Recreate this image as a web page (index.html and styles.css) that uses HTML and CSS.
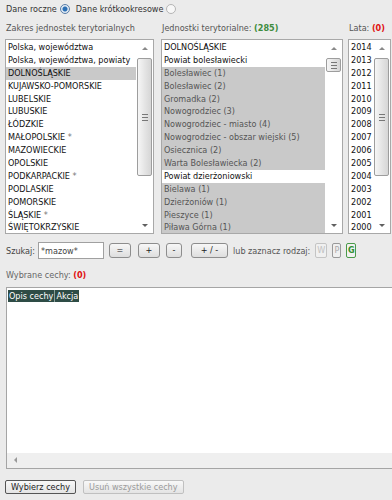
FILE: index.html
```html
<!DOCTYPE html>
<html lang="pl">
<head>
    <meta charset="UTF-8">
    <title>Wybór cech</title>
    <link rel="stylesheet" href="styles.css">
</head>
<body>
    <div class="typ-danych">
        <span>Dane roczne</span>
        <span class="radio zaznaczone"></span>
        <span>Dane krótkookresowe</span>
        <span class="radio"></span>
    </div>

    <div class="panele">
        <div class="panel panel-zakres">
            <div class="naglowek">Zakres jednostek terytorialnych</div>
            <div class="lista">
                <div class="elementy">
                    <div class="element">Polska, województwa</div>
                    <div class="element">Polska, województwa, powiaty</div>
                    <div class="element wybrany">DOLNOŚLĄSKIE</div>
                    <div class="element">KUJAWSKO-POMORSKIE</div>
                    <div class="element">LUBELSKIE</div>
                    <div class="element">LUBUSKIE</div>
                    <div class="element">ŁÓDZKIE</div>
                    <div class="element">MAŁOPOLSKIE <span class="gwiazdka">*</span></div>
                    <div class="element">MAZOWIECKIE</div>
                    <div class="element">OPOLSKIE</div>
                    <div class="element">PODKARPACKIE <span class="gwiazdka">*</span></div>
                    <div class="element">PODLASKIE</div>
                    <div class="element">POMORSKIE</div>
                    <div class="element">ŚLĄSKIE <span class="gwiazdka">*</span></div>
                    <div class="element">ŚWIĘTOKRZYSKIE</div>
                </div>
                <div class="suwak">
                    <div class="strzalka gora"></div>
                    <div class="uchwyt uchwyt-duzy"><span class="chwyt"></span></div>
                    <div class="tor"></div>
                    <div class="strzalka dol"></div>
                </div>
            </div>
        </div>

        <div class="panel panel-jednostki">
            <div class="naglowek">Jednostki terytorialne: <b class="zielony">(285)</b></div>
            <div class="lista">
                <div class="elementy">
                    <div class="element">DOLNOŚLĄSKIE</div>
                    <div class="element">Powiat bolesławiecki</div>
                    <div class="element wyszarzony">Bolesławiec (1)</div>
                    <div class="element wyszarzony">Bolesławiec (2)</div>
                    <div class="element wyszarzony">Gromadka (2)</div>
                    <div class="element wyszarzony">Nowogrodziec (3)</div>
                    <div class="element wyszarzony">Nowogrodziec - miasto (4)</div>
                    <div class="element wyszarzony">Nowogrodziec - obszar wiejski (5)</div>
                    <div class="element wyszarzony">Osiecznica (2)</div>
                    <div class="element wyszarzony">Warta Bolesławiecka (2)</div>
                    <div class="element">Powiat dzierżoniowski</div>
                    <div class="element wyszarzony">Bielawa (1)</div>
                    <div class="element wyszarzony">Dzierżoniów (1)</div>
                    <div class="element wyszarzony">Pieszyce (1)</div>
                    <div class="element wyszarzony">Piława Górna (1)</div>
                </div>
                <div class="suwak">
                    <div class="strzalka gora"></div>
                    <div class="uchwyt uchwyt-maly"><span class="chwyt"></span></div>
                    <div class="tor"></div>
                    <div class="strzalka dol"></div>
                </div>
            </div>
        </div>

        <div class="panel panel-lata">
            <div class="naglowek">Lata: <b class="czerwony">(0)</b></div>
            <div class="lista">
                <div class="elementy">
                    <div class="element">2014</div>
                    <div class="element">2013</div>
                    <div class="element">2012</div>
                    <div class="element">2011</div>
                    <div class="element">2010</div>
                    <div class="element">2009</div>
                    <div class="element">2008</div>
                    <div class="element">2007</div>
                    <div class="element">2006</div>
                    <div class="element">2005</div>
                    <div class="element">2004</div>
                    <div class="element">2003</div>
                    <div class="element">2002</div>
                    <div class="element">2001</div>
                    <div class="element">2000</div>
                </div>
                <div class="suwak">
                    <div class="strzalka gora"></div>
                    <div class="uchwyt uchwyt-duzy"><span class="chwyt"></span></div>
                    <div class="tor"></div>
                    <div class="strzalka dol"></div>
                </div>
            </div>
        </div>
    </div>

    <div class="szukaj">
        <span>Szukaj:</span>
        <input type="text" class="pole-szukaj" value="*mazow*">
        <button class="przycisk-maly p-rowne">=</button>
        <button class="przycisk-maly p-plus">+</button>
        <button class="przycisk-maly p-minus">-</button>
        <button class="przycisk-maly p-plusminus">+ / -</button>
        <span class="rodzaj-opis">lub zaznacz rodzaj:</span>
        <span class="rodzaj nieaktywny">W</span>
        <span class="rodzaj nieaktywny waski">P</span>
        <span class="rodzaj aktywny">G</span>
    </div>

    <div class="wybrane">Wybrane cechy: <b class="czerwony">(0)</b></div>

    <div class="tabela-ramka">
        <div class="tabela-tresc">
            <table class="tabela">
                <tr>
                    <th>Opis cechy</th>
                    <th>Akcja</th>
                </tr>
            </table>
        </div>
        <div class="suwak-poziomy">
            <span class="strzalka lewo"></span>
        </div>
    </div>

    <div class="przyciski">
        <button class="przycisk">Wybierz cechy</button>
        <button class="przycisk wylaczony">Usuń wszystkie cechy</button>
    </div>
</body>
</html>
```

FILE: styles.css
```css
html {
    overflow: hidden;
}

body {
    margin: 0;
    padding: 1px 0 0 6px;
    background-color: #ebebeb;
    font-family: "DejaVu Sans Condensed", "DejaVu Sans", sans-serif;
    font-size: 9px;
    color: #222;
}

.typ-danych {
    display: flex;
    align-items: center;
    gap: 3px;
    height: 16px;
    color: #333;
}

.radio {
    width: 8px;
    height: 8px;
    border: 1px solid #b5b5b5;
    border-radius: 50%;
    background-color: #f7f7f7;
    margin-right: 3px;
}

.radio.zaznaczone {
    border-color: #5a7ea8;
    background: radial-gradient(circle, #2a6fb5 0, #2a6fb5 2px, #dfe9f3 3px);
}

/* trzy listy */
.panele {
    display: flex;
    margin-top: 6px;
    margin-left: -1px;
}

.panel-zakres {
    width: 149px;
    margin-right: 7px;
}

.panel-jednostki {
    width: 182px;
    margin-right: 5px;
}

.panel-lata {
    width: 43px;
}

.naglowek {
    color: #555;
    height: 16px;
    white-space: nowrap;
    padding-left: 1px;
}

.zielony {
    color: #3d8c3d;
}

.czerwony {
    color: #e01010;
}

.lista {
    display: flex;
    height: 193px;
    border: 1px solid #a8a8a8;
    background-color: white;
}

.elementy {
    flex: 1;
    overflow: hidden;
    padding-top: 1px;
    margin-right: 1px;
}

.element {
    height: 12.9px;
    line-height: 12.9px;
    padding-left: 2px;
    white-space: nowrap;
    color: #111;
}

.element.wybrany {
    background-color: #c9c9c9;
}

.element.wyszarzony {
    background-color: #c9c9c9;
    color: #555;
}

.gwiazdka {
    color: #777;
}

.suwak {
    width: 15px;
    display: flex;
    flex-direction: column;
    padding-right: 1px;
}

.strzalka {
    height: 17px;
    position: relative;
}

.strzalka::after {
    content: "";
    position: absolute;
    left: 5px;
    width: 0;
    height: 0;
    border-left: 3px solid transparent;
    border-right: 3px solid transparent;
}

.strzalka.gora::after {
    top: 7px;
    border-bottom: 3px solid #8a8a8a;
}

.strzalka.dol::after {
    top: 8px;
    border-top: 3px solid #606060;
}

.tor {
    flex: 1;
}

.uchwyt {
    margin-top: 1px;
    border: 1px solid #9d9d9d;
    border-radius: 2px;
    background: linear-gradient(to right, #f6f6f6, #e2e2e2 60%, #d6d6d6);
    display: flex;
    align-items: center;
    justify-content: center;
}

.uchwyt-duzy {
    height: 116px;
}

.uchwyt-maly {
    height: 12px;
}

.chwyt {
    width: 6px;
    height: 5px;
    border-top: 1px solid #777;
    border-bottom: 1px solid #777;
    position: relative;
}

.chwyt::after {
    content: "";
    position: absolute;
    left: 0;
    right: 0;
    top: 2px;
    border-top: 1px solid #777;
}

/* wyszukiwanie */
.szukaj {
    display: flex;
    align-items: center;
    margin-top: 8px;
    height: 17px;
    color: #444;
}

.pole-szukaj {
    width: 66px;
    height: 17px;
    box-sizing: border-box;
    margin: 0 5px 0 3px;
    padding: 0 2px;
    border: 1px solid #a0a0a0;
    font-family: inherit;
    font-size: 9px;
    color: #444;
}

.przycisk-maly {
    height: 15px;
    padding: 0;
    border: 1px solid #8d8d8d;
    border-radius: 3px;
    background: linear-gradient(#f7f7f7, #dedede);
    font-family: inherit;
    font-size: 9px;
    color: #222;
    line-height: 13px;
}

.p-rowne { width: 22px; margin-right: 7px; }
.p-plus { width: 22px; margin-right: 6px; }
.p-minus { width: 16px; margin-right: 9px; }
.p-plusminus { width: 37px; margin-right: 5px; }

.rodzaj-opis {
    color: #555;
    margin-right: 5px;
}

.rodzaj {
    height: 13px;
    width: 10px;
    border: 1px solid #c4c4c4;
    border-radius: 2px;
    text-align: center;
    line-height: 13px;
    font-size: 9px;
    margin-right: 5px;
    background-color: #f0f0f0;
}

.rodzaj.nieaktywny {
    color: #c0c0c0;
}

.rodzaj.waski {
    width: 7px;
    color: #aaa;
    border-color: #999;
}

.rodzaj.aktywny {
    width: 8px;
    color: #2f8f2f;
    font-weight: bold;
    border-color: #4a9a4a;
}

/* wybrane cechy */
.wybrane {
    margin-top: 11px;
    color: #666;
    height: 13px;
}

.tabela-ramka {
    width: 400px;
    margin-top: 4px;
    border: 1px solid #a5a5a5;
    background-color: white;
}

.tabela-tresc {
    height: 161px;
    padding: 2px 1px;
}

.tabela {
    border-collapse: collapse;
}

.tabela th {
    background-color: #2e4c46;
    color: white;
    font-weight: normal;
    height: 12px;
    padding: 0 1px;
    border-left: 1px solid #8aa09b;
    white-space: nowrap;
}

.tabela th:first-child {
    border-left: none;
}

.suwak-poziomy {
    height: 15px;
    background-color: #efefef;
    position: relative;
}

.strzalka.lewo {
    position: absolute;
    left: 7px;
    top: 4px;
    width: 0;
    height: 0;
    border-top: 3px solid transparent;
    border-bottom: 3px solid transparent;
    border-right: 3px solid #999;
}

.przyciski {
    margin-top: 11px;
    margin-left: -1px;
    display: flex;
    gap: 7px;
}

.przycisk {
    height: 14px;
    padding: 0 5px;
    border: 1px solid #555;
    border-radius: 2px;
    background: linear-gradient(#f8f8f8, #e4e4e4);
    font-family: inherit;
    font-size: 9px;
    color: #222;
    line-height: 12px;
}

.przycisk.wylaczony {
    border-color: #c0c0c0;
    color: #9a9a9a;
}
```
